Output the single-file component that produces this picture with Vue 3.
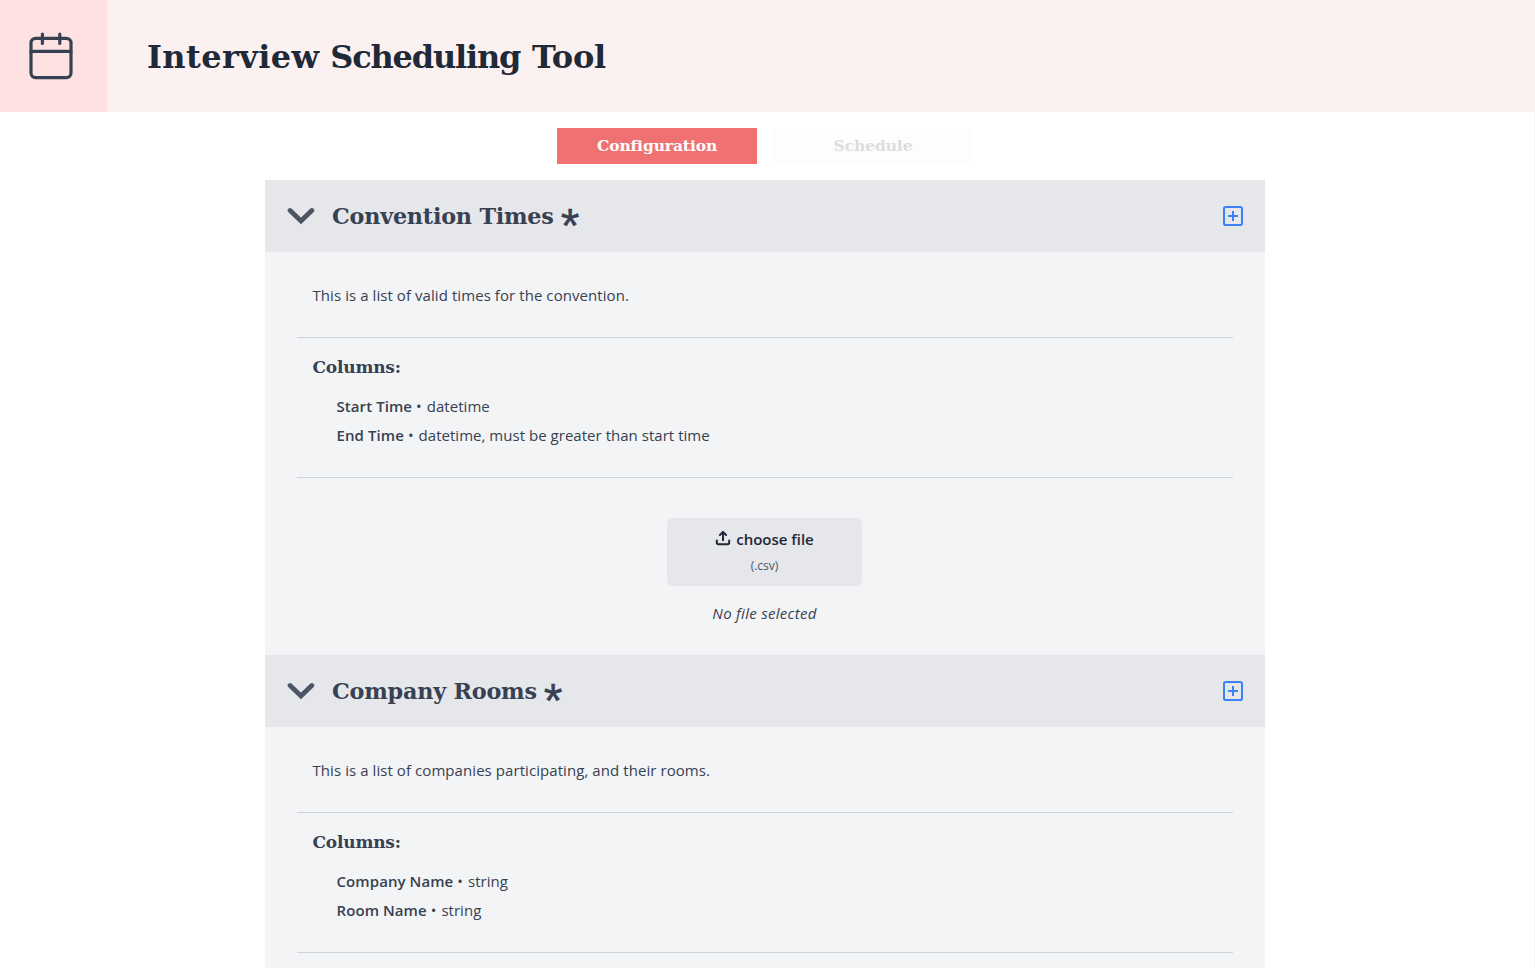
<script setup>
const sections = [
  {
    title: 'Convention Times',
    text: 'This is a list of valid times for the convention.',
    columns: [
      { name: 'Start Time', type: 'datetime' },
      { name: 'End Time', type: 'datetime, must be greater than start time' },
    ],
  },
  {
    title: 'Company Rooms',
    text: 'This is a list of companies participating, and their rooms.',
    columns: [
      { name: 'Company Name', type: 'string' },
      { name: 'Room Name', type: 'string' },
    ],
  },
]
</script>

<template>
  <div class="page">
    <header class="header">
      <div class="logo">
        <svg width="44" height="48" viewBox="0 0 44 48" fill="none" stroke="#374151" stroke-width="3.2" stroke-linecap="round">
          <rect x="2" y="6.3" width="40" height="39.4" rx="4.6" />
          <path d="M2 19.4H42M13.4 2.2V11.5M30.8 2.2V11.5" />
        </svg>
      </div>
      <h1><span class="wide">Interview</span> <span class="tight">Scheduling</span> Tool</h1>
    </header>
    <nav class="tabs">
      <button class="tab active">Configuration</button>
      <button class="tab disabled">Schedule</button>
    </nav>
    <main class="panel">
      <section v-for="s in sections" :key="s.title">
        <div class="bar">
          <svg class="chevron" width="28" height="18" viewBox="0 0 28 18" fill="none" stroke="#4b5563" stroke-width="4.8" stroke-linecap="round">
            <path d="M3.1 3.5L14 14L24.8 3.5" />
          </svg>
          <h2>{{ s.title }}<span class="star">*</span></h2>
          <svg class="add" width="20" height="20" viewBox="0 0 20 20" fill="none" stroke="#3b82f6" stroke-width="2">
            <rect x="1" y="1" width="18" height="18" rx="1.8" />
            <path d="M5 10H15M10 5V15" />
          </svg>
        </div>
        <div class="body">
          <p class="intro">{{ s.text }}</p>
          <div class="columns">
            <h3>Columns:</h3>
            <ul>
              <li v-for="c in s.columns" :key="c.name"><b>{{ c.name }}</b><span class="dot">•</span>{{ c.type }}</li>
            </ul>
          </div>
          <div class="upload">
            <button class="file">
              <span class="choose">
                <svg width="16" height="16" viewBox="0 0 16 16" fill="none" stroke="#1f2937" stroke-width="2" stroke-linecap="round" stroke-linejoin="round">
                  <path d="M1.8 10.4V12.6Q1.8 14.2 3.4 14.2H12.6Q14.2 14.2 14.2 12.6V10.4M8 10.2V2.2M4.9 5L8 1.9L11.1 5" />
                </svg>
                choose file
              </span>
              <small>(.csv)</small>
            </button>
            <em>No file selected</em>
          </div>
        </div>
      </section>
    </main>
  </div>
</template>

<style>
body {
  overflow: hidden;
}
</style>

<style scoped>
.page {
  box-sizing: border-box;
  height: 100vh;
  overflow: hidden;
  border-right: 1px solid #f5f5f6;
  background: #fff;
  color: #374151;
  font: 15px/24px "Open Sans", "Noto Sans", sans-serif;
  letter-spacing: 0.07px;
}
h1, h2, h3, p, ul {
  margin: 0;
  padding: 0;
}
h1, h2, h3, .tab {
  font-family: "DejaVu Serif", serif;
  font-weight: 700;
}
.header {
  display: flex;
  align-items: center;
  height: 112px;
  background: #fcf1f1;
}
.logo {
  display: flex;
  align-items: center;
  justify-content: center;
  box-sizing: border-box;
  width: 107px;
  height: 112px;
  padding-right: 5px;
  background: #fee2e2;
}
h1 {
  margin-left: 40px;
  padding-top: 2px;
  color: #1f2937;
  font-size: 32px;
  line-height: 40px;
  letter-spacing: -0.3px;
}
.wide {
  letter-spacing: 0.4px;
}
.tight {
  letter-spacing: -1.2px;
  margin-right: 1px;
}
.tabs {
  display: flex;
  justify-content: center;
  gap: 16px;
  width: 1530px;
  padding: 16px 0;
}
.tab {
  width: 200px;
  height: 36px;
  padding: 0 0 1px;
  border: 0;
  font-size: 15.5px;
  letter-spacing: -0.1px;
}
.active {
  background: #f07171;
  color: #fff;
}
.disabled {
  background: #fdfdfd;
  color: #dcdde0;
}
.panel {
  width: 1000px;
  margin-left: 265px;
  background: #f3f4f6;
}
.bar {
  display: flex;
  align-items: center;
  box-sizing: border-box;
  height: 72px;
  padding: 0 22px;
  background: #e5e7eb;
}
h2 {
  flex: 1;
  margin-left: 17px;
  font-size: 22.3px;
  line-height: 32px;
  letter-spacing: -0.22px;
}
.star {
  display: inline-block;
  margin-left: 7px;
  font: 400 48px/0 "Liberation Sans", sans-serif;
  letter-spacing: 0;
  -webkit-text-stroke: 0.5px #374151;
  transform: translateY(18px);
}
.body {
  height: 403px;
  box-sizing: border-box;
  padding: 31px 32px 0;
}
.intro {
  padding: 0 15.5px 30px;
}
.columns {
  box-sizing: border-box;
  height: 141px;
  padding: 15px 15.5px 0;
  border-top: 1px solid #d1d5db;
  border-bottom: 1px solid #d1d5db;
}
h3 {
  font-size: 17px;
  line-height: 28px;
  letter-spacing: -0.2px;
}
ul {
  list-style: none;
  padding: 13px 0 0 24px;
}
li {
  height: 29px;
  letter-spacing: 0.03px;
}
b {
  font-weight: 600;
  letter-spacing: 0.08px;
}
.dot {
  margin: 0 5px 0 4px;
}
.upload {
  display: flex;
  flex-direction: column;
  align-items: center;
  padding: 40px 1px 0 0;
}
.file {
  display: flex;
  flex-direction: column;
  align-items: center;
  width: 195px;
  height: 68px;
  padding: 9px 0 0;
  border: 0;
  border-radius: 6px;
  background: #e5e7eb;
  color: #1f2937;
  font: 600 15px/24px "Open Sans", "Noto Sans", sans-serif;
}
.choose {
  display: flex;
  align-items: center;
  gap: 5px;
}
.choose svg {
  margin-top: -3px;
}
small {
  margin-top: 3px;
  color: #4b5563;
  font-size: 12px;
  font-weight: 400;
}
em {
  margin-top: 15px;
  letter-spacing: 0.3px;
}
</style>
